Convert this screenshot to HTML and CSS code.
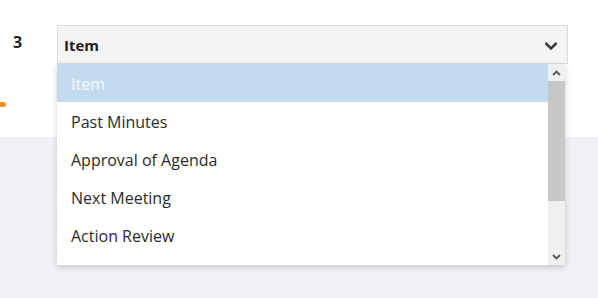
FILE: index.html
```html
<!DOCTYPE html>
<html lang="en">
<head>
    <meta charset="UTF-8">
    <title>Agenda item</title>
    <link rel="stylesheet" href="styles.css">
</head>
<body>
    <div class="page">
        <div class="top">
            <span class="marker"></span>
            <div class="row">
                <div class="num">3</div>
                <div class="field">
                    <div class="select">
                        <span class="value">Item</span>
                        <svg class="chev" width="14" height="10" viewBox="0 0 14 10"><path d="M1.5 2 L7 7.5 L12.5 2" fill="none" stroke="#3b3b3b" stroke-width="2.6"/></svg>
                    </div>
                    <div class="menu">
                        <ul class="options">
                            <li class="selected">Item</li>
                            <li>Past Minutes</li>
                            <li>Approval of Agenda</li>
                            <li>Next Meeting</li>
                            <li>Action Review</li>
                        </ul>
                        <div class="scrollbar">
                            <div class="arrow"><svg width="9" height="6" viewBox="0 0 9 6"><path d="M1 5 L4.5 1.5 L8 5" fill="none" stroke="#555" stroke-width="1.8"/></svg></div>
                            <div class="thumb"></div>
                            <div class="track"></div>
                            <div class="arrow"><svg width="9" height="6" viewBox="0 0 9 6"><path d="M1 1 L4.5 4.5 L8 1" fill="none" stroke="#555" stroke-width="1.8"/></svg></div>
                        </div>
                    </div>
                </div>
            </div>
        </div>
        <div class="bottom"></div>
    </div>
</body>
</html>
```

FILE: styles.css
```css
body {
    margin: 0;
    font-family: "Open Sans", "Liberation Sans", sans-serif;
    background-color: #f0f1f6;
    color: #222;
}
.page {
    display: flex;
    flex-direction: column;
    min-height: 100vh;
}
.top {
    position: relative;
    height: 137px;
    background: white;
    z-index: 1;
}
.bottom {
    flex: 1;
}
.marker {
    position: absolute;
    left: 0;
    top: 102px;
    width: 6px;
    height: 5px;
    background: #f7931e;
    border-radius: 0 3px 3px 0;
}
.row {
    display: flex;
    padding: 25px 0 0 13px;
}
.num {
    width: 44px;
    font-size: 16px;
    font-weight: bold;
    line-height: 30px;
    margin-top: 2px;
}
.field {
    position: relative;
    width: 511px;
}
.select {
    display: flex;
    align-items: center;
    justify-content: space-between;
    height: 37px;
    padding: 0 9px 0 6px;
    background: #f4f4f4;
    border: 1px solid #dcdcdc;
    font-size: 15px;
    font-weight: bold;
}
.chev {
    margin-top: 3px;
}
.menu {
    position: absolute;
    left: 0;
    top: 39px;
    width: 508px;
    height: 201px;
    display: flex;
    background: white;
    box-shadow: 0 2px 6px rgba(0,0,0,0.18);
}
.options {
    flex: 1;
    margin: 0;
    padding: 0;
    list-style: none;
}
.options li {
    height: 37px;
    padding-top: 1px;
    line-height: 38px;
    padding-left: 14px;
    font-size: 16px;
    color: #2b2b2b;
}
.options li.selected {
    background: #c3daef;
    color: #f4f8fc;
}
.scrollbar {
    width: 17px;
    display: flex;
    flex-direction: column;
    background: #f0f0f0;
}
.arrow {
    height: 17px;
    display: flex;
    align-items: center;
    justify-content: center;
}
.thumb {
    height: 120px;
    background: #c8c8c8;
}
.track {
    flex: 1;
}
```
